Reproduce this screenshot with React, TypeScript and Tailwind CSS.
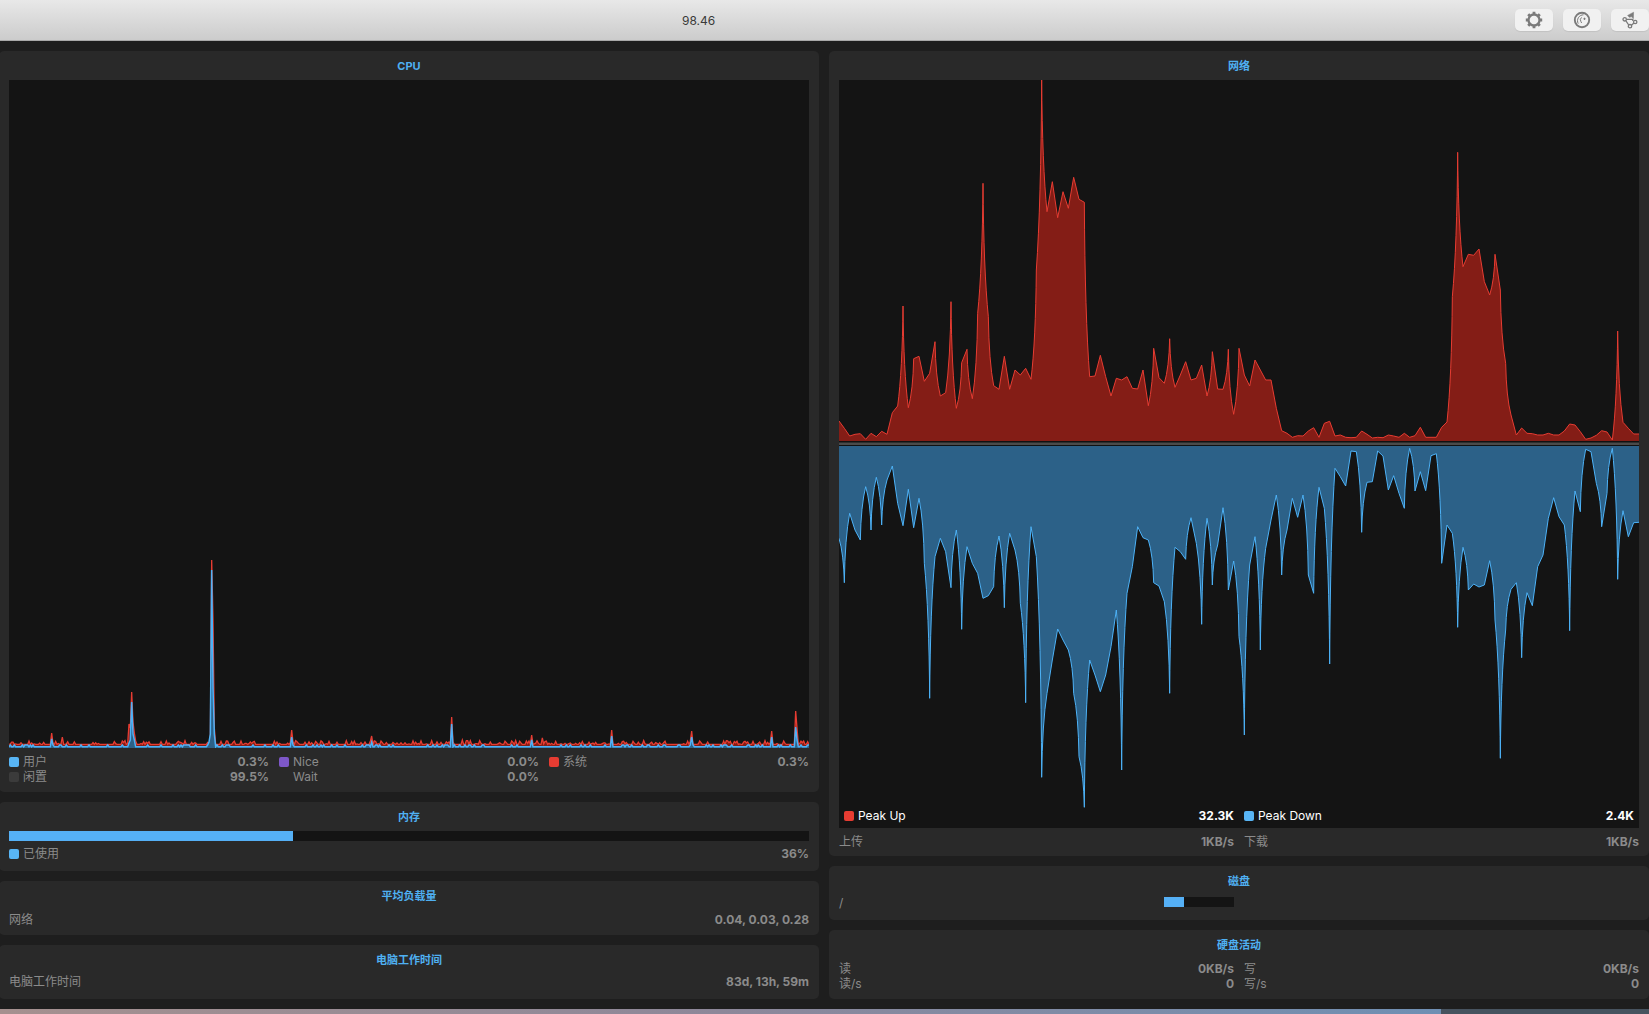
import * as React from 'react'

// network series, read off the reference every 5.33px (y inside the 748px tall chart)
const upRaw = [
  1053, 1075, 1098, 1093, 1091, 1108, 1090, 1100, 1084, 1093, 1028, 1008, 708, 1013, 866, 859, 934, 910, 815, 978, 968,
  695, 1015, 878, 838, 986, 730, 340, 740, 947, 958, 859, 958, 900, 915, 895, 928, 600, 30, 425, 335, 443, 365, 415,
  322, 388, 397, 920, 918, 856, 920, 978, 925, 930, 920, 955, 957, 900, 1007, 835, 923, 940, 806, 952, 915, 875, 930,
  925, 885, 978, 845, 957, 958, 838, 1033, 835,
]
const upRaw2 = [
  735, 768, 690, 720, 750, 750, 835, 902, 910, 922, 917, 918, 903, 893, 922, 880, 874, 918, 915, 922, 923, 922, 903,
  913, 924, 922, 923, 915, 918, 922, 910, 922, 917, 892, 922, 922, 922, 892, 876, 500, 67, 410, 373, 376, 357, 455,
  495, 373, 480, 700, 855, 915, 894, 910, 911, 915, 915, 910, 915, 915, 903, 882, 885, 905, 928, 924, 916, 902, 906,
  930, 603, 877, 895, 912, 912,
]
const downRaw = [
  325, 458, 250, 300, 330, 170, 300, 142, 285, 150, 108, 220, 287, 178, 293, 205, 400, 805, 380, 325, 365, 473, 300,
  598, 350, 400, 430, 505, 497, 470, 318, 533, 310, 360, 520, 818, 290, 380, 1042, 790, 690, 597, 630, 660, 790, 980,
  1132, 690, 735, 785, 735, 650, 540, 1020, 490, 410, 290, 323, 330, 458, 468, 515, 790, 352, 365, 388, 263, 340, 583,
  265, 465, 345, 233, 480, 393, 620, 915, 405, 320, 660, 355, 270, 195, 435, 300, 205, 262, 195, 435, 490, 172, 235,
  702, 115, 140, 168, 63, 65, 307, 157, 155, 63, 78, 180, 137, 190, 235, 55, 183, 125, 182, 77, 71, 400, 285, 310, 592,
  352, 480, 462, 471, 465, 392, 570, 985, 600, 478, 458, 683, 488, 527, 410, 375, 265, 203, 260, 285, 602, 183, 245, 58,
  65, 160, 290, 190, 55, 448, 242, 320, 278, 277,
]

const upSeries = [...upRaw.map((v) => v / 3 - 10), ...upRaw2.map((v) => 50 + v / 3)]
const downSeries = downRaw.map((v) => 350 + v / 3)
const STEP = 800 / 150

// cpu history: 600 samples, heights above the chart floor
const redSpikes: Record<number, number> = {
  32: 15, 40: 11, 90: 24, 91: 20, 92: 56, 93: 26, 94: 15, 152: 188, 153: 130, 154: 20, 212: 18, 272: 12, 332: 31, 340: 8,
  392: 13, 400: 10, 452: 18, 512: 17, 572: 17, 590: 37, 591: 20,
}
const blueSpikes: Record<number, number> = {
  32: 9, 90: 5, 91: 8, 92: 46, 93: 14, 94: 8, 150: 6, 151: 14, 152: 178, 153: 60, 154: 14, 212: 11, 272: 6, 332: 24, 392: 8,
  452: 12, 512: 11, 572: 11, 590: 21, 591: 8,
}

let seed = 17
const rand = () => {
  seed = (seed * 16807) % 2147483647
  return seed / 2147483647
}
const cpuRed: number[] = []
const cpuBlue: number[] = []
for (let i = 0; i <= 600; i++) {
  const blue = rand() > 0.8 ? 3 : 1.2
  const red = rand() > 0.68 ? 4 + rand() * 3.5 : 3.6
  cpuBlue.push(blueSpikes[i] ?? blue)
  cpuRed.push(redSpikes[i] ?? red)
}

const linePath = (ys: number[], step: number) => ys.map((y, i) => `${i ? 'L' : 'M'}${(i * step).toFixed(2)} ${y.toFixed(1)}`).join('')

// big jumps into a peak bow inwards, so the spikes stay thin near the tip
const spikePath = (ys: number[], step: number, dir: 1 | -1) =>
  ys
    .map((y, i) => {
      const x = i * step
      if (i === 0) return `M0 ${y.toFixed(1)}`
      const prev = ys[i - 1]
      const rise = (y - prev) * dir
      if (Math.abs(rise) < 40) return `L${x.toFixed(2)} ${y.toFixed(1)}`
      const cx = rise > 0 ? x - step * 0.12 : x - step * 0.88
      const cy = rise > 0 ? prev + (y - prev) * 0.35 : y + (prev - y) * 0.35
      return `Q${cx.toFixed(2)} ${cy.toFixed(1)} ${x.toFixed(2)} ${y.toFixed(1)}`
    })
    .join('')

const Title = ({ children }: { children: React.ReactNode }) => (
  <div className="flex h-[29px] items-center justify-center pt-[2px] text-[11px] font-bold text-[#4fb0f2]">{children}</div>
)

const Panel = ({ title, children, className }: { title: string; children: React.ReactNode; className: string }) => (
  <section className={`rounded-[5px] bg-[#292929] px-[10px] ${className}`}>
    <Title>{title}</Title>
    {children}
  </section>
)

const Swatch = ({ color }: { color: string }) => <span className={`mr-1 h-[10px] w-[10px] shrink-0 rounded-[2px] ${color}`} />

const Metric = ({ swatch, label, value, bright }: { swatch?: string; label: string; value: string; bright?: boolean }) => (
  <div className={`flex h-[15px] items-center justify-between text-[12px] leading-[15px] ${bright ? 'text-white' : 'text-[#8b8b8b]'}`}>
    <span className="flex items-center">
      {swatch && <Swatch color={swatch} />}
      {label}
    </span>
    <span className="font-bold">{value}</span>
  </div>
)

const CpuChart = () => {
  const red = cpuRed.map((h) => 668 - h)
  const blue = cpuBlue.map((h) => 668 - h)
  const step = 800 / 600
  return (
    <svg width="800" height="668" viewBox="0 0 800 668" className="block bg-[#141414]">
      <path d={`${linePath(red, step)}L800 668L0 668Z`} fill="#841d16" />
      <path d={linePath(red, step)} fill="none" stroke="#e63c32" strokeWidth="1.3" />
      <path d={`${linePath(blue, step)}L800 668L0 668Z`} fill="#2c6188" />
      <path d={linePath(blue, step)} fill="none" stroke="#4db2f7" strokeWidth="1.5" />
    </svg>
  )
}

const NetworkChart = () => (
  <div className="relative h-[748px] w-[800px] bg-[#141414]">
    <svg width="800" height="748" viewBox="0 0 800 748" className="block">
      <path d={`${spikePath(upSeries, STEP, -1)}L800 361L0 361Z`} fill="#841d16" />
      <path d={spikePath(upSeries, STEP, -1)} fill="none" stroke="#e63c32" strokeWidth="1" />
      <rect x="0" y="361" width="800" height="5" fill="#111111" />
      <rect x="0" y="362.5" width="800" height="2.5" fill="#4a4a4a" />
      <path d={`${spikePath(downSeries, STEP, 1)}L800 366L0 366Z`} fill="#2c6188" />
      <path d={spikePath(downSeries, STEP, 1)} fill="none" stroke="#4db2f7" strokeWidth="1" />
    </svg>
    <div className="absolute inset-x-[5px] bottom-[5px] grid grid-cols-2 gap-x-[10px]">
      <Metric swatch="bg-[#e63c32]" label="Peak Up" value="32.3K" bright />
      <Metric swatch="bg-[#58b5f5]" label="Peak Down" value="2.4K" bright />
    </div>
  </div>
)

const GearIcon = () => (
  <svg width="18" height="18" viewBox="0 0 18 18" fill="none" stroke="#7b7b7b">
    <circle cx="9" cy="9" r="5.5" strokeWidth="2.3" />
    <path
      d="M9 .8v2.6M9 14.6v2.6M.8 9h2.6M14.6 9h2.6M3.2 3.2l1.8 1.8M13 13l1.8 1.8M14.8 3.2L13 5M5 13l-1.8 1.8"
      strokeWidth="2.8"
    />
  </svg>
)

const ClockIcon = () => (
  <svg width="18" height="18" viewBox="0 0 18 18" fill="none" stroke="#7b7b7b">
    <circle cx="9" cy="9" r="7.2" strokeWidth="1.9" />
    <path d="M10.5 3.8A6 6 0 0 0 5.2 12.6" strokeWidth="1" />
    <path d="M8.6 6.4a3.2 3.2 0 0 0-.7 4.2l.8 1.4" strokeWidth="1" />
    <path d="M10.4 7.8h2.2M11.5 6.7v2.2" strokeWidth="1" />
  </svg>
)

const RouteIcon = () => (
  <svg width="18" height="18" viewBox="0 0 18 18" fill="none" stroke="#7b7b7b" strokeWidth="1.3">
    <circle cx="3.7" cy="8.3" r="1.7" />
    <circle cx="14.2" cy="11" r="1.7" />
    <circle cx="9" cy="15.2" r="1.7" />
    <path d="M5.4 8.3h6.4v1.6M4.8 9.7l2.9 4.3M10.5 14.3l2.4-2.2" />
    <path d="M6.6 4.4 12.6 1.2l-.2 6.4-2.2-2-1.6.8z" fill="#7b7b7b" strokeWidth="0.5" />
  </svg>
)

const ToolButton = ({ children }: { children: React.ReactNode }) => (
  <button className="flex h-[22px] w-[38px] items-center justify-center rounded-[5px] bg-[#f1f1f1] shadow-[0_1px_1px_rgba(0,0,0,0.08)]">
    {children}
  </button>
)

export default function App() {
  return (
    <div className="flex h-[1014px] w-[1649px] flex-col overflow-hidden bg-[#1e1e1e] font-['Inter','Noto_Sans_CJK_SC',sans-serif]">
      <header className="flex h-[41px] shrink-0 items-center border-b border-[#a9a9a9] bg-gradient-to-b from-[#e8e8e8] to-[#cccccc]">
        <span className="ml-[682px] pt-px text-[12px] text-[#3a3a3a]">98.46</span>
        <div className="ml-auto flex gap-[10px] pb-px">
          <ToolButton><GearIcon /></ToolButton>
          <ToolButton><ClockIcon /></ToolButton>
          <ToolButton><RouteIcon /></ToolButton>
        </div>
      </header>

      <main className="flex flex-1 gap-[10px] pt-[10px]">
        <div className="-ml-px flex w-[820px] shrink-0 flex-col gap-[10px]">
          <Panel title="CPU" className="h-[741px]">
            <CpuChart />
            <div className="grid grid-cols-3 gap-x-[10px] pt-[6px]">
              <Metric swatch="bg-[#58b5f5]" label="用户" value="0.3%" />
              <Metric swatch="bg-[#7d57c8]" label="Nice" value="0.0%" />
              <Metric swatch="bg-[#e63c32]" label="系统" value="0.3%" />
              <Metric swatch="bg-[#3b3b3b]" label="闲置" value="99.5%" />
              <div className="flex h-[15px] items-center justify-between pl-[14px] text-[12px] text-[#8b8b8b]">
                <span>Wait</span>
                <span className="font-bold">0.0%</span>
              </div>
            </div>
          </Panel>

          <Panel title="内存" className="h-[69px]">
            <div className="h-[10px] w-full bg-[#141414]">
              <div className="h-full w-[284px] bg-[#55b0f6]" />
            </div>
            <div className="pt-[5px]">
              <Metric swatch="bg-[#58b5f5]" label="已使用" value="36%" />
            </div>
          </Panel>

          <Panel title="平均负载量" className="h-[54px]">
            <div className="pt-[2px]">
              <Metric label="网络" value="0.04, 0.03, 0.28" />
            </div>
          </Panel>

          <Panel title="电脑工作时间" className="h-[54px]">
            <Metric label="电脑工作时间" value="83d, 13h, 59m" />
          </Panel>
        </div>

        <div className="flex w-[820px] shrink-0 flex-col gap-[10px]">
          <Panel title="网络" className="h-[805px]">
            <NetworkChart />
            <div className="grid grid-cols-2 gap-x-[10px] pt-[6px]">
              <Metric label="上传" value="1KB/s" />
              <Metric label="下载" value="1KB/s" />
            </div>
          </Panel>

          <Panel title="磁盘" className="h-[54px]">
            <div className="grid grid-cols-2 gap-x-[10px]">
              <div className="flex items-center justify-between text-[12px] leading-[15px] text-[#8b8b8b]">
                <span>/</span>
                <div className="mb-[2px] h-[10px] w-[70px] bg-[#141414]">
                  <div className="h-full w-[20px] bg-[#55b0f6]" />
                </div>
              </div>
            </div>
          </Panel>

          <Panel title="硬盘活动" className="h-[69px]">
            <div className="grid grid-cols-2 gap-x-[10px] pt-[2px]">
              <Metric label="读" value="0KB/s" />
              <Metric label="写" value="0KB/s" />
              <Metric label="读/s" value="0" />
              <Metric label="写/s" value="0" />
            </div>
          </Panel>
        </div>
      </main>

      <div className="flex h-[5px] shrink-0">
        <div className="h-full flex-1 bg-gradient-to-r from-[#a5908f] via-[#8d8799] to-[#6f8fb3]" />
        <div className="h-full w-[208px] bg-[#47535f]" />
      </div>
    </div>
  )
}
